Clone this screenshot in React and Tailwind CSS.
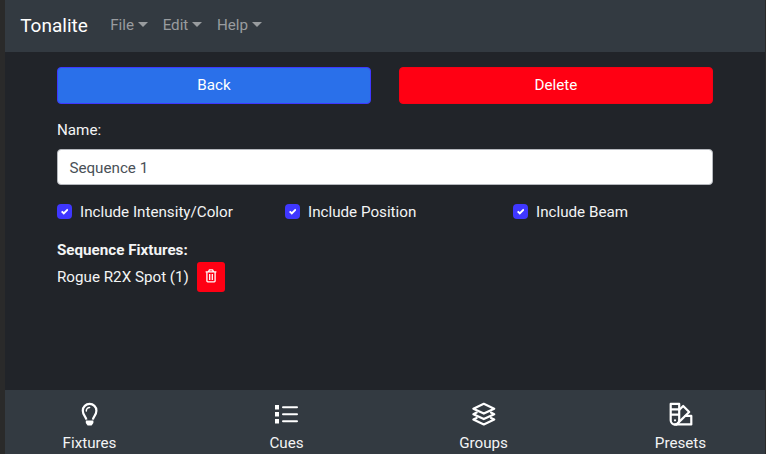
import React from 'react';

const menus = ['File', 'Edit', 'Help'];
const options = ['Include Intensity/Color', 'Include Position', 'Include Beam'];

function Icon({ children }) {
  return (
    <svg viewBox="0 0 24 24" className="h-6 w-6" fill="none" stroke="#fff" strokeWidth="2.2" strokeLinejoin="round" strokeLinecap="round">
      {children}
    </svg>
  );
}

const tabs = [
  {
    label: 'Fixtures',
    icon: (
      <Icon>
        <path d="M8.3 17.6C8 14.6 4.8 12.8 4.8 8.7a6.8 6.8 0 0 1 13.6 0c0 4.1-3.2 5.9-3.5 8.9" strokeLinecap="butt" />
        <path d="M8.3 9A3.2 3.2 0 0 1 11.6 5.6" strokeWidth="1.5" />
        <path d="M7.8 18.6h7.6v2.4l-1.8 2.4h-4L7.8 21z" fill="#fff" stroke="none" />
      </Icon>
    ),
  },
  {
    label: 'Cues',
    icon: (
      <Icon>
        <g transform="translate(-.5 .2)">
          <path d="M0 2.8h4.5v4.4H0zM0 9.8h4.5v4.4H0zM0 16.8h4.5v4.4H0z" fill="#fff" stroke="none" />
          <path d="M8.5 5h14M8.5 12h14M8.5 19h14" strokeWidth="2" />
        </g>
      </Icon>
    ),
  },
  {
    label: 'Groups',
    icon: (
      <Icon>
        <path d="M11.8 1.8 22.2 6.7 11.8 11.6 1.4 6.7z" />
        <path d="M4.6 10.6 1.4 12.2 11.8 17.1l10.4-4.9-3.2-1.6" />
        <path d="M4.6 15.9l-3.2 1.6 10.4 4.9 10.4-4.9-3.2-1.6" />
      </Icon>
    ),
  },
  {
    label: 'Presets',
    icon: (
      <Icon>
        <path d="M1.7 1.9h8.5v16.4a4.25 4.25 0 0 1-8.5 0z" />
        <path d="M2 7.3h8M2 12.7h8" />
        <path d="M10.4 7.7 14.2 4l6 6L7.6 22.4" />
        <path d="M6 22.4h16.3v-8.5h-5.8" />
        <circle cx="6" cy="18.3" r="1.1" fill="#fff" stroke="none" />
      </Icon>
    ),
  },
];

export default function App() {
  return (
    <div className="h-[454px] w-[766px] overflow-hidden border-l-5 border-r border-[#2a2a2a] bg-[#212429] font-['Roboto',sans-serif] text-[15.2px] leading-[22.5px] text-[#f3f4f5]">
      <div className="flex h-full flex-col">
        <nav className="flex h-[52px] shrink-0 items-center bg-[#333a41] pb-0.5 pl-[15.2px]">
          <span className="w-[90px] pt-0.5 text-[19px] text-white">Tonalite</span>
          <div className="flex gap-[14.6px] text-[#999c9f]">
            {menus.map((menu) => (
              <span key={menu} className="flex items-center gap-1">
                {menu}
                <span className="mb-0.5 border-x-5 border-t-5 border-x-transparent border-t-[#999c9f]" />
              </span>
            ))}
          </div>
        </nav>

        <main className="min-h-0 flex-1 px-[52px] pt-[15px]">
          <div className="grid grid-cols-2 gap-7">
            <button className="h-[37px] rounded border border-[#3f37ff] bg-[#2a70ea] pb-px text-white">Back</button>
            <button className="h-[37px] rounded border border-[#f70013] bg-[#ff0013] pb-px text-white">Delete</button>
          </div>

          <label htmlFor="name" className="mt-[15px] block">Name:</label>
          <input
            id="name"
            defaultValue="Sequence 1"
            className="mt-[7px] block h-9 w-full rounded border border-[#b5b8bd] bg-white px-[11.4px] pt-0.5 text-[#495057] outline-none"
          />

          <div className="mt-4 grid grid-cols-[228px_228px_1fr]">
            {options.map((option) => (
              <div key={option} className="flex items-center gap-2">
                <span className="flex h-[15px] w-[15px] items-center justify-center rounded bg-[#3f37ff]">
                  <svg viewBox="0 0 8 8" className="h-[7.5px] w-[7.5px]" fill="#fff">
                    <path d="M6.564.75l-3.59 3.612-1.538-1.55L0 4.26l2.974 2.99L8 2.193z" />
                  </svg>
                </span>
                {option}
              </div>
            ))}
          </div>

          <h2 className="mt-4 font-bold">Sequence Fixtures:</h2>
          <div className="flex items-center gap-2">
            <span className="pt-0.5">Rogue R2X Spot (1)</span>
            <button className="flex h-[30px] w-7 items-center justify-center rounded-[3px] bg-[#ff0013] pb-0.5">
              <svg viewBox="0 0 12 14" className="h-[14px] w-3" fill="none" stroke="#fff" strokeWidth="1.3">
                <path d="M.6 2.8h10.8M3.5 2.6 4.4.9h3.2l.9 1.7M1.9 3v9q0 .8.8.8h6.6q.8 0 .8-.8V3M4.7 5v6M7.3 5v6" />
              </svg>
            </button>
          </div>
        </main>

        <footer className="flex h-16 shrink-0 bg-[#333a41]">
          <div className="-mx-[14px] grid flex-1 grid-cols-4">
            {tabs.map((tab) => (
              <div key={tab.label} className="flex flex-col items-center pt-3">
                {tab.icon}
                <span className="mt-1.5">{tab.label}</span>
              </div>
            ))}
          </div>
        </footer>
      </div>
    </div>
  );
}
